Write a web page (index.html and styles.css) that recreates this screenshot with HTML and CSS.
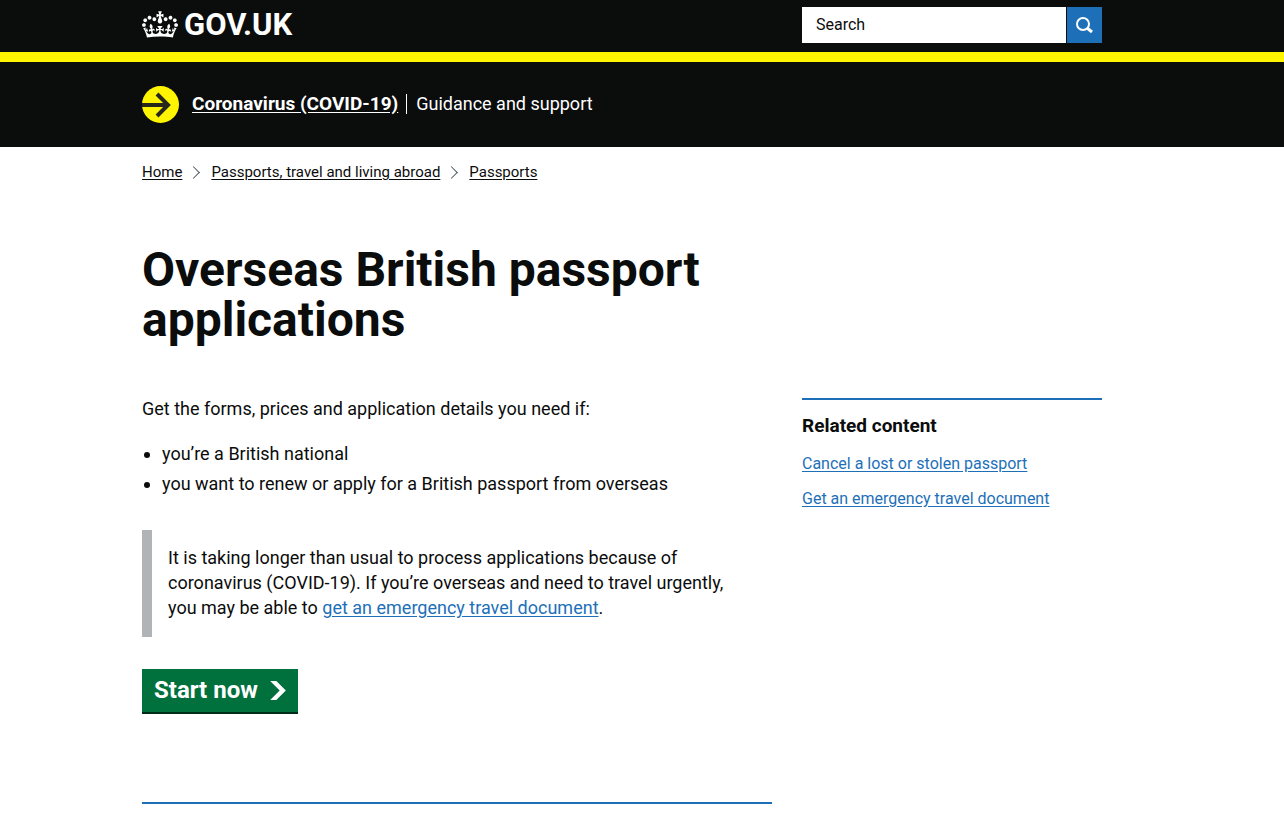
FILE: index.html
```
<!DOCTYPE html>
<html lang="en">
<head>
  <meta charset="UTF-8">
  <meta name="viewport" content="width=device-width, initial-scale=1">
  <title>Overseas British passport applications - GOV.UK</title>
  <link rel="stylesheet" href="styles.css">
</head>
<body>

  <header class="header">
    <div class="container header-row">
      <a class="logo" href="#">
        <svg class="crown" viewBox="0 0 132 97" aria-hidden="true">
          <path fill="currentColor" d="M25 30.2c3.5 1.5 7.7-.2 9.1-3.7 1.5-3.6-.2-7.8-3.9-9.2-3.6-1.4-7.6.3-9.1 3.9-1.4 3.5.3 7.5 3.9 9zM9 39.5c3.6 1.5 7.8-.2 9.2-3.7 1.5-3.6-.2-7.8-3.9-9.1-3.6-1.5-7.6.2-9.1 3.8-1.4 3.5.3 7.5 3.8 9zM4.4 57.2c3.5 1.5 7.7-.2 9.1-3.8 1.5-3.6-.2-7.7-3.9-9.1-3.5-1.5-7.6.3-9.1 3.8-1.4 3.5.3 7.6 3.9 9.1zm38.3-21.4c3.5 1.5 7.7-.2 9.1-3.8 1.5-3.6-.2-7.7-3.9-9.1-3.6-1.5-7.6.3-9.1 3.8-1.3 3.6.4 7.7 3.9 9.1zm64.4-5.6c-3.6 1.5-7.8-.2-9.1-3.7-1.5-3.6.2-7.8 3.8-9.2 3.6-1.4 7.7.3 9.2 3.9 1.3 3.5-.4 7.5-3.9 9zm15.9 9.3c-3.6 1.5-7.7-.2-9.1-3.7-1.5-3.6.2-7.8 3.7-9.1 3.6-1.5 7.7.2 9.2 3.8 1.5 3.5-.3 7.5-3.8 9zm4.7 17.7c-3.6 1.5-7.8-.2-9.2-3.8-1.5-3.6.2-7.7 3.9-9.1 3.6-1.5 7.7.3 9.2 3.8 1.3 3.5-.4 7.6-3.9 9.1zM89.3 35.8c-3.6 1.5-7.8-.2-9.2-3.8-1.4-3.6.2-7.7 3.9-9.1 3.6-1.5 7.7.3 9.2 3.8 1.4 3.6-.3 7.7-3.9 9.1zM69.7 17.7l8.9 4.7V9.3l-8.9 2.8c-.2-.3-.5-.6-.9-.9L72.4 0H59.6l3.5 11.2c-.3.3-.6.5-.9.9l-8.8-2.8v13.1l8.8-4.7c.3.3.6.7.9.9l-5 15.4v.1c-.2.8-.4 1.6-.4 2.4 0 4.1 3.1 7.5 7 8.1h.2c.3 0 .7.1 1 .1.4 0 .7 0 1-.1h.2c4-.6 7.1-4.1 7.1-8.1 0-.8-.1-1.7-.4-2.4V34l-5.1-15.4c.4-.2.7-.6 1-.9zM66 92.8c16.9 0 32.8 1.1 47.1 3.2 4-16.9 8.9-26.7 14-33.5l-9.6-3.4c1 4.9 1.1 7.2 0 10.2-1.5-1.4-3-4.3-4.2-8.7L108.6 76c2.8-2 5-3.2 7.5-3.3-4.4 9.4-10 11.9-13.6 11.2-4.3-.8-6.3-4.6-5.6-7.9 1-4.7 5.7-5.9 8-.5 4.3-8.7-3-11.4-7.6-8.8 7.1-7.2 7.9-13.5 2.1-21.1-8 6.1-8.1 12.3-4.5 20.8-4.7-5.4-12.1-2.5-9.5 6.2 3.4-5.2 7.9-2 7.2 3.1-.6 4.3-6.4 7.8-13.5 7.2-10.3-.9-10.9-8-11.2-13.8 2.5-.5 7.1 1.8 11 7.3L80.2 60c-4.1 4.4-8 5.3-12.3 5.4 1.4-4.4 8-11.6 8-11.6H55.5s6.4 7.2 7.9 11.6c-4.2-.1-8-1-12.3-5.4l1.4 16.4c3.9-5.5 8.5-7.7 10.9-7.3-.3 5.8-.9 12.8-11.1 13.8-7.2.6-12.9-2.9-13.5-7.2-.7-5 3.8-8.3 7.1-3.1 2.7-8.7-4.6-11.6-9.4-6.2 3.7-8.5 3.6-14.7-4.6-20.8-5.8 7.6-5 13.9 2.2 21.1-4.7-2.6-11.9.1-7.7 8.8 2.3-5.5 7.1-4.2 8.1.5.7 3.3-1.3 7.1-5.7 7.9-3.5.7-9-1.8-13.5-11.2 2.5.1 4.7 1.3 7.5 3.3l-4.7-15.4c-1.2 4.4-2.7 7.2-4.3 8.7-1.1-3-.9-5.3 0-10.2l-9.5 3.4c5 6.9 9.9 16.7 14 33.5 14.8-2.1 30.8-3.2 47.7-3.2z"/>
        </svg>
        <span>GOV.UK</span>
      </a>
      <form class="search" role="search">
        <input class="search-input" type="text" placeholder="Search" aria-label="Search">
        <button class="search-button" type="submit" aria-label="Search GOV.UK">
          <svg width="20" height="18" viewBox="0 0 20 18" fill="none" stroke="currentColor" aria-hidden="true">
            <circle cx="8" cy="8" r="6" stroke-width="2"/>
            <path d="M12 12l5 4" stroke-width="3"/>
          </svg>
        </button>
      </form>
    </div>
  </header>

  <section class="covid" aria-label="Coronavirus">
    <div class="container covid-row">
      <svg class="covid-icon" viewBox="0 0 37 37" aria-hidden="true">
        <circle cx="18.5" cy="18.5" r="18.5" fill="#fff500"/>
        <path d="M0 19h26M15 8l11 11-11 11" fill="none" stroke="#27281a" stroke-width="4"/>
      </svg>
      <div class="covid-message">
        <a class="covid-link" href="#">Coronavirus (COVID-19)</a>
        <span class="covid-text">Guidance and support</span>
      </div>
    </div>
  </section>

  <div class="container">
    <nav aria-label="Breadcrumb">
      <ol class="breadcrumbs">
        <li><a href="#">Home</a></li>
        <li><a href="#">Passports, travel and living abroad</a></li>
        <li><a href="#">Passports</a></li>
      </ol>
    </nav>

    <div class="columns">
      <main class="content">
        <h1>Overseas British passport applications</h1>

        <p>Get the forms, prices and application details you need if:</p>
        <ul class="list">
          <li>you’re a British national</li>
          <li>you want to renew or apply for a British passport from overseas</li>
        </ul>

        <div class="inset">
          <p>It is taking longer than usual to process applications because of
          coronavirus (COVID-19). If you’re overseas and need to travel urgently,
          you may be able to <a href="#">get an emergency travel document</a>.</p>
        </div>

        <button class="start-button" type="button">
          Start now
          <svg width="16" height="19" viewBox="0 0 33 40" aria-hidden="true">
            <path fill="currentColor" d="M0 0h13l20 20-20 20H0l20-20z"/>
          </svg>
        </button>

        <hr class="divider">
      </main>

      <aside class="related">
        <h2>Related content</h2>
        <ul>
          <li><a href="#">Cancel a lost or stolen passport</a></li>
          <li><a href="#">Get an emergency travel document</a></li>
        </ul>
      </aside>
    </div>
  </div>

</body>
</html>
```

FILE: styles.css
```
* {
  box-sizing: border-box;
}

body {
  margin: 0;
  font-family: Roboto, "Liberation Sans", sans-serif;
  font-size: 18px;
  line-height: 25px;
  color: #0b0c0c;
  background-color: #fff;
}

a {
  color: #1d70b8;
  text-underline-offset: 2px;
}

ul,
ol {
  list-style: none;
  margin: 0;
  padding: 0;
}

.container {
  max-width: 1000px;
  margin: 0 auto;
  padding-right: 40px;
}

.header {
  background-color: #0b0c0c;
  border-bottom: 10px solid #fff500;
}

.header-row {
  display: flex;
  align-items: center;
  justify-content: space-between;
  padding-top: 7px;
  padding-bottom: 9px;
}

.logo {
  display: flex;
  align-items: center;
  gap: 6px;
  color: #fff;
  font-size: 31px;
  font-weight: bold;
  line-height: 36px;
  text-decoration: none;
}

.crown {
  width: 36px;
  height: 27px;
  margin-bottom: 2px;
}

.search {
  display: flex;
  gap: 1px;
  width: 300px;
}

.search-input {
  flex: 1;
  min-width: 0;
  height: 36px;
  padding: 0 14px 1px;
  border: 0;
  border-radius: 0;
  font: inherit;
  font-size: 16px;
}

.search-input::placeholder {
  color: #0b0c0c;
  opacity: 1;
}

.search-button {
  display: flex;
  align-items: center;
  justify-content: center;
  width: 35px;
  height: 36px;
  padding: 0;
  border: 0;
  color: #fff;
  background-color: #1d70b8;
  cursor: pointer;
}

.covid {
  color: #fff;
  background-color: #0b0c0c;
}

.covid-row {
  display: flex;
  align-items: center;
  padding-top: 24px;
  padding-bottom: 24px;
}

.covid-icon {
  width: 37px;
  height: 37px;
  margin-right: 13px;
}

.covid-message {
  display: flex;
  align-items: baseline;
  padding-bottom: 3px;
}

.covid-link {
  color: #fff;
  font-size: 19px;
  font-weight: bold;
}

.covid-text {
  margin-left: 8px;
  padding-left: 9px;
  border-left: 1px solid #fff;
  line-height: 20px;
}

.breadcrumbs {
  display: flex;
  flex-wrap: wrap;
  padding-top: 15px;
  font-size: 15px;
  line-height: 20px;
}

.breadcrumbs li {
  display: flex;
  align-items: center;
}

.breadcrumbs li + li::before {
  content: "";
  width: 8px;
  height: 8px;
  margin: 0 13px 0 7px;
  border: solid #505a5f;
  border-width: 1px 1px 0 0;
  transform: rotate(45deg);
}

.breadcrumbs a {
  color: #0b0c0c;
}

.columns {
  display: flex;
  gap: 30px;
  margin-top: 63px;
}

.content {
  flex: 1;
  min-width: 0;
}

h1 {
  margin: 0 0 51px;
  font-size: 48px;
  line-height: 50px;
}

p {
  margin: 0 0 20px;
}

.list {
  list-style: disc;
  padding-left: 20px;
}

.list li {
  margin-bottom: 5px;
}

.inset {
  margin: 34px 0 32px;
  padding: 15px 16px 17px;
  border-left: 10px solid #b1b4b6;
}

.inset p {
  margin: 0;
}

.start-button {
  display: flex;
  align-items: center;
  gap: 12px;
  height: 45px;
  padding: 0 12px;
  border: 0;
  border-bottom: 2px solid #002d18;
  color: #fff;
  background-color: #00703c;
  font: inherit;
  font-size: 24px;
  font-weight: bold;
  cursor: pointer;
}

.divider {
  margin: 88px 0 0;
  border: 0;
  border-top: 2px solid #1d70b8;
}

.related {
  width: 300px;
  margin-top: 153px;
}

.related h2 {
  margin: 0 0 16px;
  padding-top: 13px;
  border-top: 2px solid #1d70b8;
  font-size: 19px;
  line-height: 25px;
}

.related li {
  margin-bottom: 15px;
  font-size: 16px;
  line-height: 20px;
}

@media (max-width: 1040px) {
  .container {
    padding-left: 20px;
    padding-right: 20px;
  }
}

@media (max-width: 760px) {
  .columns {
    flex-direction: column;
  }

  .related {
    width: auto;
    margin-top: 0;
  }
}
```
